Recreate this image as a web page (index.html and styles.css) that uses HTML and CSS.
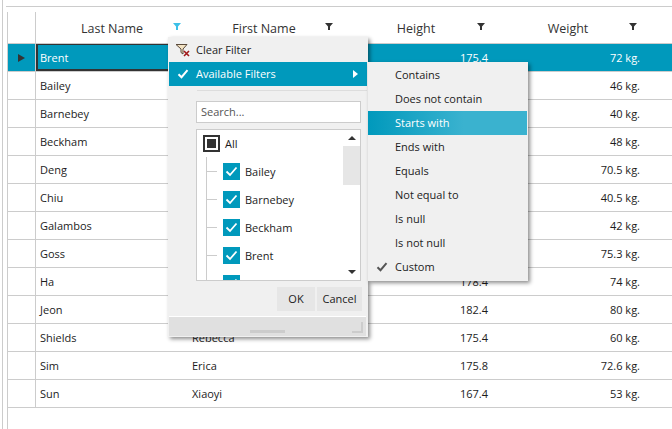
FILE: index.html
```html
<!DOCTYPE html>
<html lang="en">
<head>
    <meta charset="UTF-8">
    <title>Grid filter</title>
    <link rel="stylesheet" href="styles.css">
</head>
<body>
    <div class="frame">
        <div class="top-line"></div>
        <div class="grid">
            <div class="row head">
                <div class="row-header"></div>
                <div class="cell center">Last Name<svg class="funnel active" viewBox="0 0 8 7"><path d="M0 0h8L5 3.5V7H3V3.5z"/></svg></div>
                <div class="cell center">First Name<svg class="funnel" viewBox="0 0 8 7"><path d="M0 0h8L5 3.5V7H3V3.5z"/></svg></div>
                <div class="cell center">Height<svg class="funnel" viewBox="0 0 8 7"><path d="M0 0h8L5 3.5V7H3V3.5z"/></svg></div>
                <div class="cell center">Weight<svg class="funnel" viewBox="0 0 8 7"><path d="M0 0h8L5 3.5V7H3V3.5z"/></svg></div>
            </div>
            <div class="row selected">
                <div class="row-header"><span class="current"></span></div>
                <div class="cell current-cell">Brent</div>
                <div class="cell"></div>
                <div class="cell right">175.4</div>
                <div class="cell right">72 kg.</div>
            </div>
            <div class="row"><div class="row-header"></div><div class="cell">Bailey</div><div class="cell"></div><div class="cell right"></div><div class="cell right">46 kg.</div></div>
            <div class="row"><div class="row-header"></div><div class="cell">Barnebey</div><div class="cell"></div><div class="cell right"></div><div class="cell right">40 kg.</div></div>
            <div class="row"><div class="row-header"></div><div class="cell">Beckham</div><div class="cell"></div><div class="cell right"></div><div class="cell right">48 kg.</div></div>
            <div class="row"><div class="row-header"></div><div class="cell">Deng</div><div class="cell"></div><div class="cell right"></div><div class="cell right">70.5 kg.</div></div>
            <div class="row"><div class="row-header"></div><div class="cell">Chiu</div><div class="cell"></div><div class="cell right"></div><div class="cell right">40.5 kg.</div></div>
            <div class="row"><div class="row-header"></div><div class="cell">Galambos</div><div class="cell"></div><div class="cell right"></div><div class="cell right">42 kg.</div></div>
            <div class="row"><div class="row-header"></div><div class="cell">Goss</div><div class="cell"></div><div class="cell right"></div><div class="cell right">75.3 kg.</div></div>
            <div class="row"><div class="row-header"></div><div class="cell">Ha</div><div class="cell"></div><div class="cell right">178.4</div><div class="cell right">74 kg.</div></div>
            <div class="row"><div class="row-header"></div><div class="cell">Jeon</div><div class="cell"></div><div class="cell right">182.4</div><div class="cell right">80 kg.</div></div>
            <div class="row"><div class="row-header"></div><div class="cell">Shields</div><div class="cell">Rebecca</div><div class="cell right">175.4</div><div class="cell right">60 kg.</div></div>
            <div class="row"><div class="row-header"></div><div class="cell">Sim</div><div class="cell">Erica</div><div class="cell right">175.8</div><div class="cell right">72.6 kg.</div></div>
            <div class="row"><div class="row-header"></div><div class="cell">Sun</div><div class="cell">Xiaoyi</div><div class="cell right">167.4</div><div class="cell right">53 kg.</div></div>
        </div>
    </div>

    <div class="filter-menu">
        <div class="menu-item">
            <span class="menu-icon">
                <svg width="16" height="14" viewBox="0 0 16 14"><path d="M1 1.5h11L8 6v5L6 9.5V6z" fill="#f3e3c4" stroke="#5a4a3a"/><path d="M9 8l5 5M14 8l-5 5" stroke="#a01818" stroke-width="1.6"/></svg>
            </span>
            Clear Filter
        </div>
        <div class="menu-item on">
            <span class="menu-icon">
                <svg width="12" height="10" viewBox="0 0 12 10"><path d="M1.5 5.2l3 3 6-7" fill="none" stroke="#fff" stroke-width="2"/></svg>
            </span>
            Available Filters
            <span class="sub-arrow"></span>
        </div>
        <div class="menu-sep"></div>
        <div class="filter-body">
            <div class="search">Search...</div>
            <div class="list">
                <div class="tree">
                    <div class="tree-all"><span class="check-all"></span>All</div>
                    <div class="tree-items">
                        <div class="tree-item"><span class="check"><svg width="13" height="11" viewBox="0 0 13 11"><path d="M1.5 5.5l3.5 3.5 6.5-7.5" fill="none" stroke="#fff" stroke-width="1.8"/></svg></span>Bailey</div>
                        <div class="tree-item"><span class="check"><svg width="13" height="11" viewBox="0 0 13 11"><path d="M1.5 5.5l3.5 3.5 6.5-7.5" fill="none" stroke="#fff" stroke-width="1.8"/></svg></span>Barnebey</div>
                        <div class="tree-item"><span class="check"><svg width="13" height="11" viewBox="0 0 13 11"><path d="M1.5 5.5l3.5 3.5 6.5-7.5" fill="none" stroke="#fff" stroke-width="1.8"/></svg></span>Beckham</div>
                        <div class="tree-item"><span class="check"><svg width="13" height="11" viewBox="0 0 13 11"><path d="M1.5 5.5l3.5 3.5 6.5-7.5" fill="none" stroke="#fff" stroke-width="1.8"/></svg></span>Brent</div>
                        <div class="tree-item"><span class="check"><svg width="13" height="11" viewBox="0 0 13 11"><path d="M1.5 5.5l3.5 3.5 6.5-7.5" fill="none" stroke="#fff" stroke-width="1.8"/></svg></span>Chiu</div>
                    </div>
                </div>
                <div class="scrollbar">
                    <span class="arrow-up"></span>
                    <span class="thumb"></span>
                    <span class="arrow-down"></span>
                </div>
            </div>
            <div class="buttons">
                <div class="btn ok">OK</div>
                <div class="btn">Cancel</div>
            </div>
        </div>
        <div class="grip">
            <span class="grip-bar"></span>
            <span class="grip-corner"></span>
        </div>
    </div>

    <div class="sub-menu">
        <div class="sub-item">Contains</div>
        <div class="sub-item">Does not contain</div>
        <div class="sub-item hover">Starts with</div>
        <div class="sub-item">Ends with</div>
        <div class="sub-item">Equals</div>
        <div class="sub-item">Not equal to</div>
        <div class="sub-item">Is null</div>
        <div class="sub-item">Is not null</div>
        <div class="sub-item">
            <svg class="sub-check" width="12" height="10" viewBox="0 0 12 10"><path d="M1.5 5.2l3 3 6-7" fill="none" stroke="#555" stroke-width="2"/></svg>
            Custom
        </div>
    </div>
</body>
</html>
```

FILE: styles.css
```css
html, body {
    margin: 0;
    height: 100%;
    overflow: hidden;
}
body {
    font-family: "Open Sans", "Noto Sans", sans-serif;
    font-size: 11px;
    color: #1c1c1c;
    background: white;
}
.frame {
    margin-left: 2px;
    height: 429px;
    border-left: 1px solid #ccc;
    box-sizing: border-box;
    padding: 6px 0 0 4px;
}
.top-line {
    margin-left: -1px;
    border-top: 1px solid #ccc;
    height: 5px;
}
.grid {
    border-left: 1px solid #ccc;
    height: 417px;
}
.row {
    display: flex;
    height: 28px;
    box-sizing: border-box;
    border-bottom: 1px solid #ccc;
}
.row.head {
    height: 32px;
    font-size: 12.5px;
    color: #333;
}
.row-header {
    width: 28px;
    flex: none;
    box-sizing: border-box;
    border-right: 1px solid #ccc;
    display: flex;
    align-items: center;
    justify-content: center;
}
.cell {
    width: 152px;
    flex: none;
    box-sizing: border-box;
    padding: 0 4px;
    line-height: 27px;
    position: relative;
    white-space: nowrap;
}
.center {
    text-align: center;
    line-height: 33px;
}
.right {
    text-align: right;
}
.funnel {
    position: absolute;
    right: 7px;
    top: 11px;
    width: 8px;
    height: 7px;
    fill: #333;
}
.funnel.active {
    fill: #3cc0e8;
}
.selected {
    background: #0099bc;
    color: white;
}
.current {
    width: 0;
    height: 0;
    border-left: 7px solid #333;
    border-top: 4.5px solid transparent;
    border-bottom: 4.5px solid transparent;
}
.current-cell {
    border: 2px solid #333;
    border-top-width: 1px;
    padding-left: 2px;
    line-height: 25px;
}

.filter-menu {
    position: absolute;
    left: 168px;
    top: 37px;
    width: 200px;
    height: 300px;
    box-sizing: border-box;
    padding-top: 1px;
    background: #f0f0f0;
    box-shadow: 2px 2px 4px rgba(0,0,0,0.45);
    display: flex;
    flex-direction: column;
}
.menu-item {
    height: 24px;
    line-height: 24px;
    display: flex;
    align-items: center;
    margin: 0 1px;
}
.menu-item.on {
    background: #0099bc;
    color: white;
}
.menu-icon {
    width: 27px;
    flex: none;
    display: flex;
    align-items: center;
    justify-content: center;
    padding-left: 1px;
    box-sizing: border-box;
}
.sub-arrow {
    margin-left: auto;
    margin-right: 9px;
    border-left: 5px solid white;
    border-top: 4.5px solid transparent;
    border-bottom: 4.5px solid transparent;
}
.menu-sep {
    margin: 4px 1px 0 29px;
    border-top: 1px solid #ddd;
}
.filter-body {
    flex: 1;
    padding: 10px 7px 0 28px;
}
.search {
    height: 22px;
    line-height: 20px;
    box-sizing: border-box;
    border: 1px solid #ccc;
    background: white;
    padding-left: 4px;
    color: #555;
}
.list {
    margin-top: 6px;
    height: 152px;
    box-sizing: border-box;
    border: 1px solid #ccc;
    background: white;
    display: flex;
    overflow: hidden;
}
.tree {
    flex: 1;
    padding-left: 6px;
    margin-top: -1px;
}
.tree-all {
    height: 28px;
    display: flex;
    align-items: center;
}
.check-all {
    width: 17px;
    height: 17px;
    box-sizing: border-box;
    border: 2px solid #333;
    margin-right: 5px;
    padding: 2px;
    background: #333;
    background-clip: content-box;
}
.tree-items {
    margin-left: 3px;
    border-left: 1px solid #ccc;
    height: 200px;
}
.tree-item {
    height: 28px;
    display: flex;
    align-items: center;
    position: relative;
    padding-left: 16px;
}
.tree-item::before {
    content: "";
    position: absolute;
    left: 0;
    top: 14px;
    width: 10px;
    border-top: 1px solid #ccc;
}
.check {
    width: 17px;
    height: 17px;
    background: #0099bc;
    margin-right: 5px;
    display: flex;
    align-items: center;
    justify-content: center;
}
.scrollbar {
    width: 17px;
    flex: none;
    display: flex;
    flex-direction: column;
    align-items: center;
    position: relative;
}
.arrow-up {
    margin-top: 6px;
    border-bottom: 4px solid #333;
    border-left: 4px solid transparent;
    border-right: 4px solid transparent;
}
.thumb {
    width: 17px;
    height: 39px;
    margin-top: 6px;
    background: #e6e6e6;
}
.arrow-down {
    margin-top: auto;
    margin-bottom: 6px;
    border-top: 4px solid #333;
    border-left: 4px solid transparent;
    border-right: 4px solid transparent;
}
.buttons {
    display: flex;
    justify-content: flex-end;
    gap: 2px;
    margin: 6px -1px 0 0;
}
.btn {
    width: 45px;
    height: 24px;
    line-height: 24px;
    text-align: center;
    background: #e6e6e6;
}
.btn.ok {
    width: 38px;
}
.grip {
    height: 19px;
    margin: 0 2px 1px 1px;
    background: #e0e0e0;
    border-top: 1px solid white;
    position: relative;
}
.grip-bar {
    position: absolute;
    left: 81px;
    bottom: 3px;
    width: 35px;
    height: 3px;
    background: #ccc;
}
.grip-corner {
    position: absolute;
    right: 3px;
    bottom: 3px;
    width: 9px;
    height: 9px;
    border-right: 2px solid #ccc;
    border-bottom: 2px solid #ccc;
}

.sub-menu {
    position: absolute;
    left: 368px;
    top: 62px;
    width: 160px;
    height: 219px;
    box-sizing: border-box;
    padding-top: 1px;
    background: #f0f0f0;
    box-shadow: 2px 2px 4px rgba(0,0,0,0.45);
}
.sub-item {
    height: 24px;
    line-height: 24px;
    padding-left: 27px;
    position: relative;
}
.sub-item.hover {
    margin-right: 1px;
    color: white;
    background: linear-gradient(90deg, #0099bc, #3ab2cf 60%);
}
.sub-check {
    position: absolute;
    left: 8px;
    top: 7px;
}
```
